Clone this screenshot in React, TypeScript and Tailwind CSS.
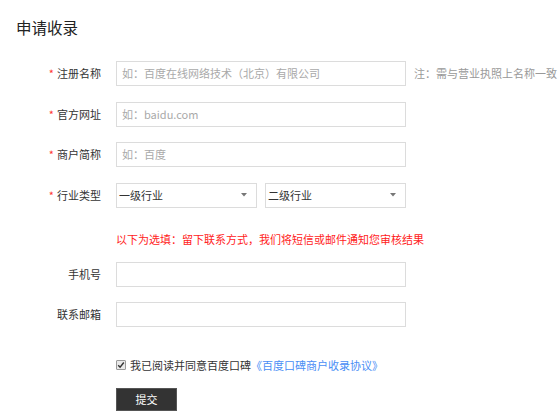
import React from 'react';

const font = { fontFamily: '"Noto Sans CJK SC", "Noto Sans", sans-serif' };

interface RowProps {
  label: string;
  required?: boolean;
  children: React.ReactNode;
}

const Row: React.FC<RowProps> = ({ label, required, children }) => (
  <div className="flex items-center h-[25px] mb-[15.5px]">
    <div className="w-[101px] shrink-0 flex justify-end items-center text-[11px] text-[#333]">
      {required && <span className="text-[#f33] mr-[3px] text-[11px]">*</span>}
      <span>{label}</span>
    </div>
    <div className="ml-[15px] flex items-center h-full">{children}</div>
  </div>
);

const TextBox: React.FC<{ placeholder?: string }> = ({ placeholder }) => (
  <div className="w-[290px] h-[25px] border border-[#dcdcdc] bg-white flex items-center px-[5px] text-[11px] text-[#a9a9a9]">
    {placeholder}
  </div>
);

const SelectBox: React.FC<{ text: string; w: string }> = ({ text, w }) => (
  <div className={`${w} h-[25px] border border-[#dcdcdc] bg-white flex items-center justify-between pl-[2px] pr-[9px] text-[11px] text-[#333]`}>
    <span>{text}</span>
    <svg width="6" height="4" viewBox="0 0 6 4">
      <path d="M0 0 L6 0 L3 3.5 Z" fill="#777" />
    </svg>
  </div>
);

export default function App() {
  return (
    <div className="w-[558px] h-[416px] bg-white overflow-hidden pt-[16px]" style={font}>
      <div className="pl-[16px] h-[22px] leading-[22px] text-[15.5px] text-[#222]">申请收录</div>

      <div className="mt-[23px]">
        <Row label="注册名称" required>
          <TextBox placeholder="如：百度在线网络技术（北京）有限公司" />
          <span className="ml-[8px] text-[11px] text-[#999] whitespace-nowrap">注：需与营业执照上名称一致</span>
        </Row>
        <Row label="官方网址" required>
          <TextBox placeholder="如：baidu.com" />
        </Row>
        <Row label="商户简称" required>
          <TextBox placeholder="如：百度" />
        </Row>
        <div className="flex items-center h-[25px]">
          <div className="w-[101px] shrink-0 flex justify-end items-center text-[11px] text-[#333]">
            <span className="text-[#f33] mr-[3px]">*</span>
            <span>行业类型</span>
          </div>
          <div className="ml-[15px] flex items-center gap-[8px]">
            <SelectBox text="一级行业" w="w-[141px]" />
            <SelectBox text="二级行业" w="w-[141px]" />
          </div>
        </div>

        <div className="ml-[116px] mt-[23px] h-[16px] leading-[16px] text-[11px] text-[#f22] whitespace-nowrap">
          以下为选填：留下联系方式，我们将短信或邮件通知您审核结果
        </div>

        <div className="mt-[15px]">
          <Row label="手机号">
            <TextBox />
          </Row>
          <div className="flex items-center h-[25px]">
            <div className="w-[101px] shrink-0 text-right text-[11px] text-[#333]">联系邮箱</div>
            <div className="ml-[15px]">
              <TextBox />
            </div>
          </div>
        </div>

        <div className="ml-[116px] mt-[30px] h-[16px] flex items-center text-[11px] whitespace-nowrap">
          <span className="w-[10px] h-[10px] border border-[#9a9a9a] bg-[#e9e9e9] rounded-[1px] flex items-center justify-center mr-[4px]">
            <svg width="8" height="8" viewBox="0 0 8 8">
              <path d="M1.2 4.2 L3.1 6.2 L6.8 1.5" stroke="#333" strokeWidth="1.4" fill="none" />
            </svg>
          </span>
          <span className="text-[#333]">我已阅读并同意百度口碑</span>
          <span className="text-[#4a8ef5]">《百度口碑商户收录协议》</span>
        </div>

        <div className="ml-[116px] mt-[15px] w-[61px] h-[23px] bg-[#333] border border-[#555] flex items-center justify-center text-[11px] text-white">
          提交
        </div>
      </div>
    </div>
  );
}
